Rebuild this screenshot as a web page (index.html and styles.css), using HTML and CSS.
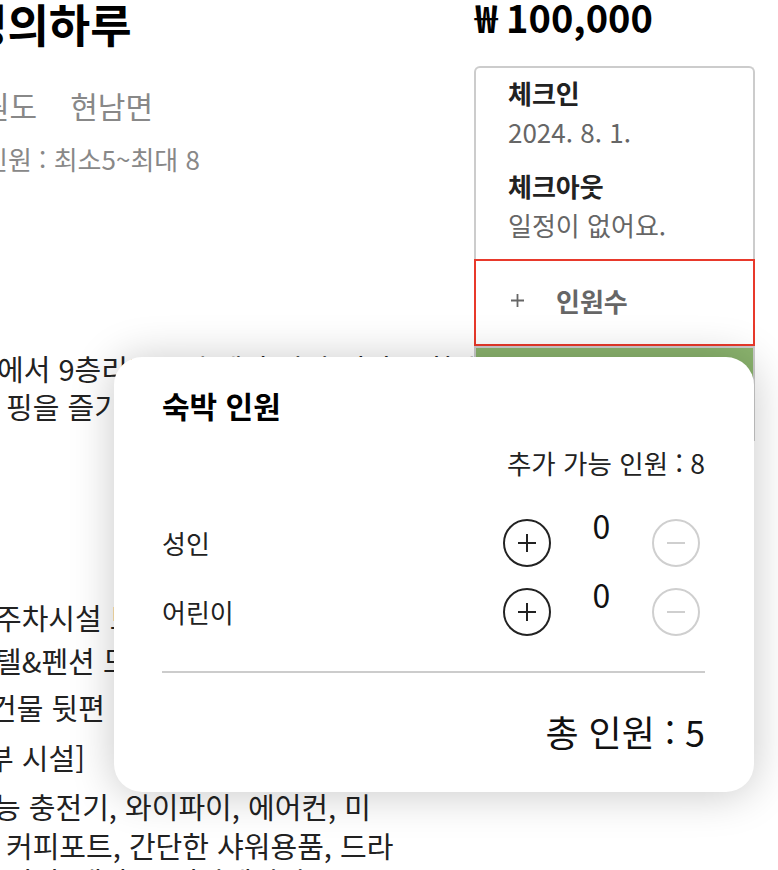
FILE: index.html
```html
<!DOCTYPE html>
<html lang="ko">
<head>
<meta charset="utf-8">
<title>숙박 인원</title>
<link rel="stylesheet" href="styles.css">
</head>
<body>
<div class="page">
  <main class="detail">
    <h1 class="title">영의하루</h1>
    <div class="loc"><span class="loc-a">원도</span><span class="loc-b">현남면</span></div>
    <div class="capacity">인원 : 최소5~최대 8</div>
    <div class="desc">
      <p class="l1">에서 9층리조트 호텔과 바다 전망을 함께</p>
      <p class="l2">핑을 즐기실 수 있습니다.</p>
      <p class="l3">주차시설 보유, 무료 주차 가능</p>
      <p class="l4">텔&amp;펜션 모든 객실 이용 가능</p>
      <p class="l5">건물 뒷편 마당 주차장 이용</p>
      <p class="l6">부 시설]</p>
      <p class="l7">능 충전기, 와이파이, 에어컨, 미</p>
      <p class="l8">커피포트, 간단한 샤워용품, 드라</p>
      <p class="l9">이기, 냉장고, 전자레인지</p>
    </div>
  </main>
  <aside class="side">
    <div class="price">₩ 100,000</div>
    <div class="booking">
      <div class="dates">
        <div class="label">체크인</div>
        <div class="value">2024. 8. 1.</div>
        <div class="label label-out">체크아웃</div>
        <div class="value">일정이 없어요.</div>
      </div>
      <div class="guests">
        <svg class="guests-plus" width="15" height="15" viewBox="0 0 15 15"><path d="M7.5 1v13M1 7.5h13" stroke="#666" stroke-width="1.8" fill="none"/></svg>
        <span>인원수</span>
      </div>
      <div class="reserve"></div>
    </div>
  </aside>
</div>

<div class="modal">
  <h2 class="modal-title">숙박 인원</h2>
  <div class="avail">추가 가능 인원 : 8</div>
  <div class="row row-first">
    <div class="row-label">성인</div>
    <div class="counter">
      <svg class="circle-btn" width="48" height="48" viewBox="0 0 48 48"><circle cx="24" cy="24" r="23" fill="none" stroke="#222" stroke-width="2"/><path d="M15 24h18M24 15v18" stroke="#222" stroke-width="2"/></svg>
      <span class="count">0</span>
      <svg class="circle-btn" width="48" height="48" viewBox="0 0 48 48"><circle cx="24" cy="24" r="23" fill="none" stroke="#cfcfcf" stroke-width="2"/><path d="M15 24h18" stroke="#cfcfcf" stroke-width="2"/></svg>
    </div>
  </div>
  <div class="row row-second">
    <div class="row-label">어린이</div>
    <div class="counter">
      <svg class="circle-btn" width="48" height="48" viewBox="0 0 48 48"><circle cx="24" cy="24" r="23" fill="none" stroke="#222" stroke-width="2"/><path d="M15 24h18M24 15v18" stroke="#222" stroke-width="2"/></svg>
      <span class="count">0</span>
      <svg class="circle-btn" width="48" height="48" viewBox="0 0 48 48"><circle cx="24" cy="24" r="23" fill="none" stroke="#cfcfcf" stroke-width="2"/><path d="M15 24h18" stroke="#cfcfcf" stroke-width="2"/></svg>
    </div>
  </div>
  <div class="divider"></div>
  <div class="total">총 인원 : 5</div>
</div>
</body>
</html>
```
FILE: styles.css
```css
* { box-sizing: border-box; }
html, body {
  margin: 0;
  height: 100%;
  overflow: hidden;
  background: #fff;
}
body {
  font-family: "Noto Sans CJK KR", "Noto Sans", sans-serif;
  color: #222;
}
.page {
  display: flex;
  align-items: flex-start;
}
.detail {
  flex: 0 0 474px;
  overflow: hidden;
}
.title {
  margin: 0;
  font-size: 45px;
  line-height: 48px;
  font-weight: 700;
  color: #000;
  white-space: nowrap;
  text-indent: -34px;
}
.loc {
  margin-top: 39px;
  display: flex;
  font-size: 30px;
  line-height: 36px;
  color: #888;
  white-space: nowrap;
}
.loc-a { margin-left: -18px; }
.loc-b { margin-left: 33px; }
.capacity {
  margin-top: 19px;
  font-size: 26px;
  line-height: 34px;
  color: #888;
  white-space: nowrap;
  text-indent: -16px;
}
.desc p {
  margin: 0;
  font-size: 29px;
  line-height: 38px;
  color: #222;
  white-space: nowrap;
}
.desc .l1 { margin-top: 173px; text-indent: -3px; }
.desc .l2 { text-indent: 6px; }
.desc .l3 { margin-top: 173px; text-indent: -5px; }
.desc .l4 { margin-top: 5px; text-indent: -5px; }
.desc .l5 { margin-top: 9px; text-indent: -10px; }
.desc .l6 { margin-top: 12px; text-indent: -13px; }
.desc .l7 { margin-top: 11px; text-indent: -6px; }
.desc .l8 { margin-top: 1px; text-indent: 6px; }
.desc .l9 { margin-top: -2px; text-indent: 6px; }

.side {
  flex: 0 0 281px;
}
.price {
  font-size: 38px;
  line-height: 34px;
  font-weight: 700;
  color: #000;
  white-space: nowrap;
  padding-left: 1px;
}
.booking {
  margin-top: 32px;
}
.dates {
  border: 2px solid #ccc;
  border-bottom: 0;
  border-radius: 6px 6px 0 0;
  padding: 8px 0 17px 32px;
}
.label {
  font-size: 26px;
  line-height: 34px;
  font-weight: 700;
  color: #222;
  margin-bottom: 5px;
}
.label-out { margin-top: 20px; }
.value {
  font-size: 26px;
  line-height: 34px;
  color: #666;
}
.guests {
  height: 87px;
  border: 2px solid #e8392b;
  display: flex;
  align-items: center;
  padding: 0 0 5px 34px;
  gap: 31px;
  font-size: 26px;
  font-weight: 700;
  color: #666;
}
.guests-plus { display: block; }
.reserve {
  height: 95px;
  background: #8bb46e;
  border: 2px solid #ccc;
  border-bottom: 0;
}

.modal {
  position: absolute;
  left: 114px;
  top: 357px;
  width: 640px;
  background: #fff;
  border-radius: 28px;
  box-shadow: 0 2px 44px rgba(0, 0, 0, 0.22);
  padding: 30px 49px 39px 48px;
}
.modal-title {
  margin: 0;
  font-size: 30px;
  line-height: 36px;
  font-weight: 700;
  color: #000;
}
.avail {
  margin-top: 24px;
  text-align: right;
  font-size: 26.5px;
  line-height: 32px;
  color: #222;
}
.row {
  display: flex;
  align-items: center;
  height: 48px;
}
.row-first { margin-top: 40px; }
.row-second { margin-top: 21px; }
.row-label {
  flex: 1;
  font-size: 26px;
  line-height: 32px;
  color: #222;
}
.counter {
  display: flex;
  align-items: flex-start;
  margin-right: 5px;
}
.circle-btn { display: block; }
.count {
  width: 101px;
  text-align: center;
  font-size: 32px;
  line-height: 30px;
  margin-top: -9px;
  color: #111;
}
.divider {
  height: 2px;
  background: #ccc;
  margin-top: 35px;
}
.total {
  margin-top: 36px;
  text-align: right;
  font-size: 36px;
  line-height: 44px;
  color: #111;
}
```
